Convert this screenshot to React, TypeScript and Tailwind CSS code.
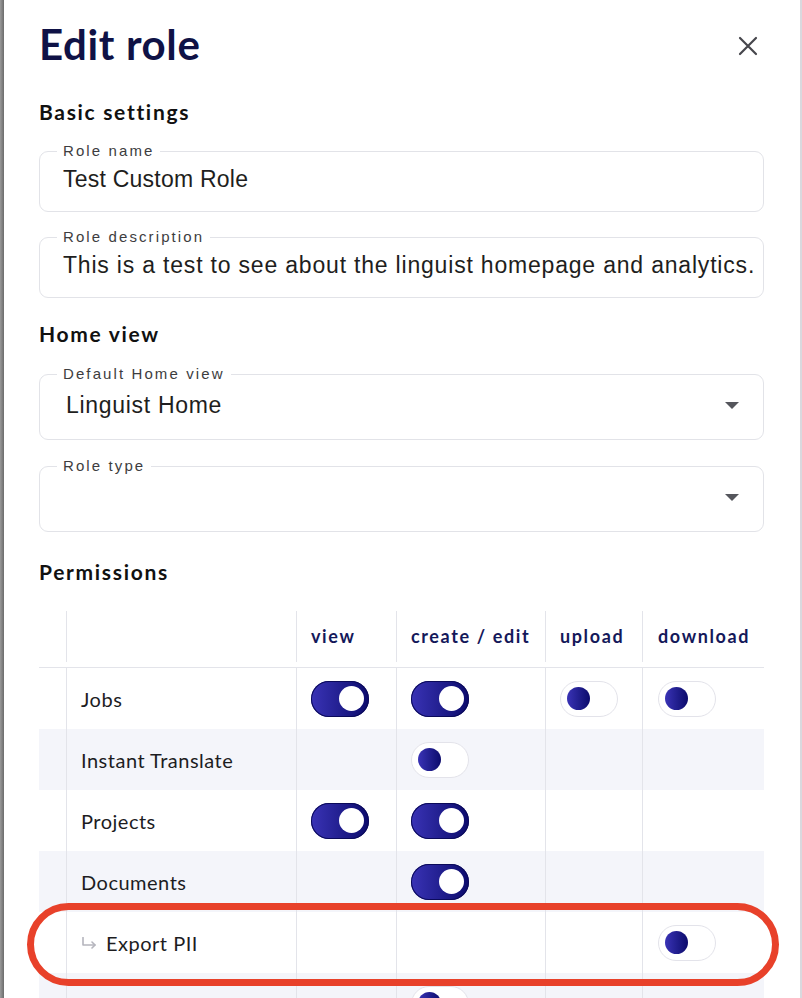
import React from 'react';

const label = "font-['Liberation_Sans',Arial,sans-serif]";
const heading = "font-['Lato','Liberation_Sans',sans-serif]";

const Toggle: React.FC<{ on?: boolean }> = ({ on }) =>
  on ? (
    <div className="w-[58px] h-[36px] rounded-full bg-gradient-to-r from-[#3a33b6] to-[#0c0a6c] flex items-center justify-end pr-[5px] shadow-[inset_0_0_0_1px_#0b0a5a]">
      <div className="w-[25px] h-[25px] rounded-full bg-white" />
    </div>
  ) : (
    <div className="w-[58px] h-[36px] rounded-full bg-white border-[1.5px] border-[#e3e3ea] flex items-center pl-[6px]">
      <div className="w-[23px] h-[23px] rounded-full bg-gradient-to-r from-[#3a33b6] to-[#0c0a6c]" />
    </div>
  );

const SubArrow = () => (
  <svg width="16" height="12" viewBox="0 0 16 12" fill="none" stroke="#b5b5bd" strokeWidth="1.6" strokeLinecap="round" strokeLinejoin="round">
    <path d="M2 0.5 V8 H14" />
    <path d="M11 5 L14 8 L11 11" />
  </svg>
);

const Caret = () => (
  <svg width="14" height="7" viewBox="0 0 14 7" className="shrink-0">
    <path d="M0 0 H14 L7 7 Z" fill="#55565c" />
  </svg>
);

type Row = { name: string; sub?: boolean; view?: boolean | null; edit?: boolean | null; upload?: boolean | null; download?: boolean | null };

const rows: Row[] = [
  { name: 'Jobs', view: true, edit: true, upload: false, download: false },
  { name: 'Instant Translate', edit: false },
  { name: 'Projects', view: true, edit: true },
  { name: 'Documents', edit: true },
  { name: 'Export PII', sub: true, download: false },
  { name: 'Glossaries', edit: false },
];

const cell = 'border-l border-[#e3e4ea] px-[14px] flex items-center';

const Field: React.FC<{ title: string; value: string; tall?: boolean; select?: boolean; valuePad?: string; track?: string }> = ({ title, value, tall, select, valuePad, track }) => (
  <div className={`relative ${tall ? 'h-[66px]' : 'h-[61px]'} rounded-[9px] border-[1.5px] border-[#e2e3e8] flex items-center pb-[4px] ${valuePad ?? 'pl-[23px]'} ${select ? 'pr-[24px]' : 'pr-[4px]'}`}>
    <span className={`absolute left-[17px] top-[-9px] bg-white px-[6px] text-[15px] leading-[16px] tracking-[0.14em] text-[#3d3d40] ${label}`}>
      {title}
    </span>
    <span className={`flex-1 min-w-0 overflow-hidden text-[23px] text-[#1e1e20] whitespace-nowrap ${track ?? 'tracking-[0.01em]'} ${label}`}>{value}</span>
    {select && <Caret />}
  </div>
);

export default function App() {
  return (
    <div className="relative w-[802px] h-[998px] overflow-hidden bg-white flex">
      <div className="w-[4px] shrink-0 bg-gradient-to-r from-[#9a9a9a] to-[#6c6c6c]" />
      <div className="w-[796px] shrink-0 min-w-0 pl-[35px] pr-[36px]">
        {/* Header */}
        <div className="flex items-center justify-between pt-[23px]">
          <h1 className={`text-[42px] leading-none font-bold text-[#0f1246] tracking-[0.015em] ${heading}`}>Edit role</h1>
          <svg width="20" height="20" viewBox="0 0 20 20" className="mr-[6px] mt-[4px]" stroke="#46464c" strokeWidth="2.2" strokeLinecap="round">
            <path d="M2 2 L18 18 M18 2 L2 18" />
          </svg>
        </div>

        <h2 className={`mt-[36px] text-[21px] leading-none font-bold text-[#111] tracking-[0.08em] ${heading}`}>Basic settings</h2>
        <div className="mt-[29px]">
          <Field title="Role name" value="Test Custom Role" />
        </div>
        <div className="mt-[25px]">
          <Field title="Role description" value="This is a test to see about the linguist homepage and analytics." track="tracking-[0.035em]" />
        </div>

        <h2 className={`mt-[25px] text-[21px] leading-none font-bold text-[#111] tracking-[0.08em] ${heading}`}>Home view</h2>
        <div className="mt-[30px]">
          <Field title="Default Home view" value="Linguist Home" tall select valuePad="pl-[26px]" track="tracking-[0.03em]" />
        </div>
        <div className="mt-[26px]">
          <Field title="Role type" value="" tall select />
        </div>

        <h2 className={`mt-[29px] text-[21px] leading-none font-bold text-[#111] tracking-[0.08em] ${heading}`}>Permissions</h2>

        {/* Permissions table */}
        <div className={`mt-[29px] ${heading}`}>
          <div className="grid grid-cols-[27px_230px_100px_149px_97px_122px] h-[57px] pb-[5px] border-b-[1.5px] border-[#e3e4ea] text-[18px] font-bold text-[#14185a] tracking-[0.09em]">
            <div />
            <div className={cell} />
            <div className={cell}>view</div>
            <div className={cell}>create / edit</div>
            <div className={cell}>upload</div>
            <div className={`${cell} pl-[15px]`}>download</div>
          </div>
          {rows.map((r, i) => (
            <div
              key={r.name}
              className={`grid grid-cols-[27px_230px_100px_149px_97px_122px] h-[61px] text-[20px] text-[#1d1d1f] tracking-[0.025em] ${i % 2 === 1 ? 'bg-[#f4f5fa]' : 'bg-white'}`}
            >
              <div />
              <div className={`${cell} gap-[9px]`}>
                {r.sub && <SubArrow />}
                <span>{r.name}</span>
              </div>
              <div className={cell}>{r.view != null && <Toggle on={r.view} />}</div>
              <div className={cell}>{r.edit != null && <Toggle on={r.edit} />}</div>
              <div className={cell}>{r.upload != null && <Toggle on={r.upload} />}</div>
              <div className={`${cell} pl-[15px]`}>{r.download != null && <Toggle on={r.download} />}</div>
            </div>
          ))}
        </div>
      </div>
      <div className="w-[2px] shrink-0 bg-[#d9d9de]" />

      {/* Highlight annotation */}
      <div className="absolute left-[27px] top-[903px] w-[752px] h-[83px] rounded-[42px] border-[7px] border-[#e8412a] pointer-events-none" />
    </div>
  );
}
